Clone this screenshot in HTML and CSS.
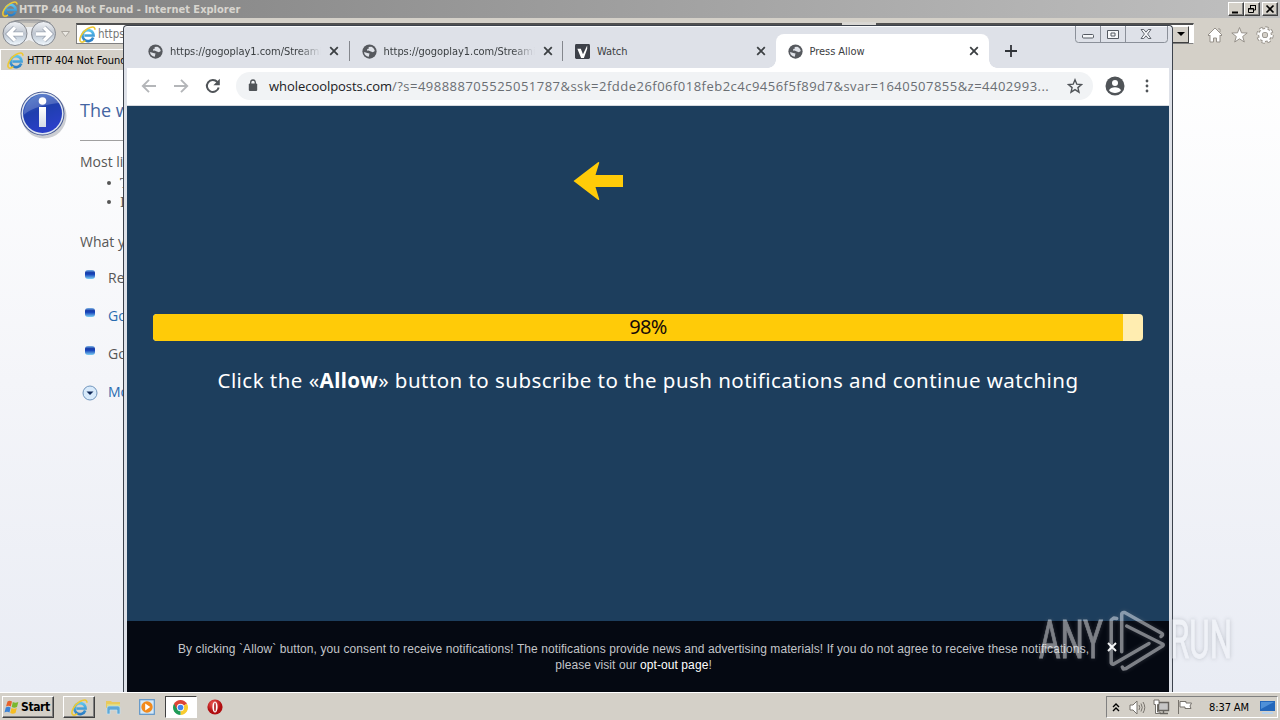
FILE: index.html
```html
<!DOCTYPE html>
<html lang="en">
<head>
<meta charset="utf-8">
<title>Press Allow</title>
<link rel="stylesheet" href="styles.css">
</head>
<body>
<svg class="defs" aria-hidden="true">
  <defs>
    <linearGradient id="ieBlue" x1="0" y1="0" x2="0" y2="1"><stop offset="0" stop-color="#5cc4ee"/><stop offset="1" stop-color="#2a7cc4"/></linearGradient>
    <linearGradient id="navDisc" x1="0" y1="0" x2="0" y2="1"><stop offset="0" stop-color="#f2f4f7"/><stop offset=".5" stop-color="#bfc6d0"/><stop offset=".75" stop-color="#d3dde7"/><stop offset="1" stop-color="#f4faff"/></linearGradient>
    <linearGradient id="infoBlue" x1="0" y1="0" x2=".4" y2="1"><stop offset="0" stop-color="#3f6fc4"/><stop offset=".5" stop-color="#1f3fae"/><stop offset="1" stop-color="#2a3fc8"/></linearGradient>
    <linearGradient id="infoStem" x1="0" y1="0" x2="0" y2="1"><stop offset="0" stop-color="#fff"/><stop offset="1" stop-color="#d4dae6"/></linearGradient>
    <radialGradient id="operaRed" cx=".4" cy=".3"><stop offset="0" stop-color="#f0605a"/><stop offset="1" stop-color="#b00d10"/></radialGradient>
    <symbol id="ie" viewBox="0 0 16 16">
      <path d="M13.400 10.800A5.200 5.200 0 1 1 13.700 8.900H5" fill="none" stroke="url(#ieBlue)" stroke-width="2.500"/>
      <path d="M1.500 14.700C-.6 12 3 5.500 8 2.600c3.600-2.100 7.200-2.500 7 .9M1.500 14.700c1.200.9 3.200.1 4.500-.9" fill="none" stroke="#eec833" stroke-width="1.500"/>
    </symbol>
    <symbol id="globe" viewBox="0 0 16 16">
      <circle cx="8" cy="8" r="7.600" fill="#56595e"/>
      <path d="M2.200 8.500l3.400 1.200 2.400.4-.8 3.400C4.500 13.400 2.300 11.500 2.200 8.500zM7 3.200l3-.4c2 .8 3.400 2.600 3.600 4.700l-2 1.200-2.800-.9-1.800-.9-1.600.2.200-1.700 1.800-.5z" fill="#dfe2e8"/>
    </symbol>
    <symbol id="cross" viewBox="0 0 10 10"><path d="M1.200 1.200l7.600 7.600M8.800 1.200L1.200 8.800" stroke="#3c4043" stroke-width="1.800" fill="none"/></symbol>
  </defs>
</svg>

<main class="desktop">
  <section class="ie">
    <header class="ie-title">
      <svg class="i16"><use href="#ie"/></svg>
      <span class="ie-title-text">HTTP 404 Not Found - Internet Explorer</span>
      <div class="ie-controls">
        <i class="btn3d"><svg width="12" height="10"><path d="M2 8.500h6" stroke="#000" stroke-width="2"/></svg></i>
        <i class="btn3d"><svg width="12" height="10"><path d="M4.500 4V1.500h5v4.500H8M4 1.500h6M2.500 4.500h5v4h-5zM2 5h6" fill="none" stroke="#000"/></svg></i>
        <i class="btn3d gap"><svg width="12" height="10"><path d="M2.500 1.500l7 7M9.500 1.500l-7 7" stroke="#000" stroke-width="1.700"/></svg></i>
      </div>
    </header>
    <div class="ie-nav">
      <svg class="nav-pill" viewBox="0 0 72 29">
        <path d="M10 3.500Q15 1 22 1h16q8 0 12 3.500z" fill="#b3b2b0"/><path d="M8 24q6 3 14 0l7-3 7 3q8 3 15 0V8H8z" fill="#eceef1"/>
        <path d="M8 4.500Q14 1 22 1h16q8 0 13 3.500" stroke="#8b8d91" fill="none"/>
        <g stroke="#858990" fill="url(#navDisc)"><circle cx="15" cy="14.500" r="12"/><circle cx="43.500" cy="14.500" r="12"/></g>
        <g fill="none" stroke="#9ba4b2" stroke-width="5"><path d="M23 15H9M15 8.500L8.500 15l6.500 6.500M36 15h14M44 8.500l6.500 6.500-6.500 6.500"/></g>
        <g fill="none" stroke="#fff" stroke-width="3.400"><path d="M23 15H9M15 8.500L8.500 15l6.500 6.500M36 15h14M44 8.500l6.500 6.500-6.500 6.500"/></g>
        <path d="M61.500 12.500h8l-4 5z" fill="#ebe9e4" stroke="#aaa69f"/>
      </svg>
      <div class="address"><svg class="i18"><use href="#ie"/></svg><span>https://gogoplay1.com</span><i class="notch"></i><i class="drop"></i></div>
      <div class="ie-tools">
        <svg width="16" height="18" viewBox="0 0 16 18"><path d="M1 9l7-7 7 7-1 1-1-1v7H9.500v-4h-3v4H3V9l-1 1zM11 3h2v3" fill="#fff" stroke="#96918a"/></svg>
        <svg width="17" height="18" viewBox="0 0 17 18"><path d="M8.500 1.500l2 5.300 5.700.2-4.500 3.500 1.600 5.500-4.800-3.200L3.700 16l1.600-5.500L.8 7l5.700-.2z" fill="#fff" stroke="#96918a"/></svg>
        <svg width="18" height="18" viewBox="0 0 18 18"><circle cx="9" cy="9" r="6.700" fill="none" stroke="#96918a" stroke-width="4" stroke-dasharray="3 2.260"/><circle cx="9" cy="9" r="4.600" fill="none" stroke="#96918a" stroke-width="4.600"/><circle cx="9" cy="9" r="6.600" fill="none" stroke="#fff" stroke-width="2.400" stroke-dasharray="2.400 2.780"/><circle cx="9" cy="9" r="4.500" fill="none" stroke="#fff" stroke-width="2.800"/></svg>
      </div>
    </div>
    <div class="ie-tabs"><div class="ie-tab"><svg class="i17"><use href="#ie"/></svg><span>HTTP 404 Not Found</span></div></div>
    <div class="ie-page">
      <svg class="info" viewBox="0 0 48 50">
        <circle cx="24" cy="26" r="22.500" fill="#9b9fa8" opacity=".5"/><circle cx="22.500" cy="23.500" r="22" fill="#4a5c94"/><circle cx="22.500" cy="23.500" r="21" fill="#dfe6f2"/><circle cx="22.500" cy="23.500" r="19.500" fill="url(#infoBlue)"/>
        <path d="M3.500 25C4 13 12 5 22.500 4c8 0 14 4 17 9C28 14 12 17 3.500 25z" fill="#fff" opacity=".2"/>
        <circle cx="22.500" cy="11" r="3.800" fill="#fff"/><path d="M19 17h7v20h-7z" fill="url(#infoStem)"/>
      </svg>
      <div class="ie-copy">
        <h1>The webpage cannot be found</h1>
        <p class="likely">Most likely causes:</p>
        <ul class="causes"><li>There might be a typing error.</li><li>If you clicked on a link.</li></ul>
        <p class="try">What you can try:</p>
        <ul class="tries">
          <li><i class="bead"></i>Retype the address.</li>
          <li class="link"><i class="bead"></i>Go back to the previous page.</li>
          <li><i class="bead"></i>Go to the main page.</li>
          <li class="link"><svg class="more" viewBox="0 0 16 16"><circle cx="8" cy="8" r="7" fill="#d8eafb" stroke="#7296bd"/><path d="M4.500 6.500h7L8 10z" fill="#102858"/></svg>More information</li>
        </ul>
      </div>
    </div>
  </section>

  <section class="chrome">
    <div class="strip">
      <div class="tab"><svg class="fav"><use href="#globe"/></svg><span class="tt fade">https://gogoplay1.com/Streaming</span><svg class="x"><use href="#cross"/></svg></div>
      <div class="tab"><svg class="fav"><use href="#globe"/></svg><span class="tt fade">https://gogoplay1.com/Streaming</span><svg class="x"><use href="#cross"/></svg></div>
      <div class="tab last"><svg class="fav" viewBox="0 0 16 16"><rect width="16" height="16" rx="1.500" fill="#3d4149"/><path d="M2.500 5h3.700l2.300 6L13 1.500V5L9.500 15h-3z" fill="#fff"/></svg><span class="tt">Watch</span><svg class="x"><use href="#cross"/></svg></div>
      <div class="tab active"><svg class="fav"><use href="#globe"/></svg><span class="tt">Press Allow</span><svg class="x"><use href="#cross"/></svg></div>
      <svg class="plus" viewBox="0 0 12 12"><path d="M6 0v12M0 6h12" stroke="#303338" stroke-width="1.800"/></svg>
    </div>
    <svg class="caption" viewBox="0 0 94 18">
      <path d="M.5 0v13.500q0 3 3 3h86q3 0 3-3V0M25.500 0v16.500M50.500 0v16.500" fill="none" stroke="#8b9099"/>
      <g fill="#f6f7f9" stroke="#555a62"><rect x="7.500" y="8.500" width="11" height="3.500" rx="1"/><path d="M32.500 4.500h11v8h-11z"/><path d="M36 7h4v3h-4z"/><path d="M66 3.500h2.800l2.200 2.700 2.200-2.700H76L72.600 8l3.400 4.500h-2.800L71 9.800l-2.200 2.700H66L69.400 8z" stroke-width=".9"/></g>
    </svg>
    <div class="toolbar">
      <svg class="nav" viewBox="0 0 16 16"><path d="M15 8H2M8 1.800L1.800 8 8 14.200" fill="none" stroke="#b4b6b9" stroke-width="1.900"/></svg>
      <svg class="nav" viewBox="0 0 16 16"><path d="M1 8h13M8 1.800L14.200 8 8 14.200" fill="none" stroke="#b4b6b9" stroke-width="1.900"/></svg>
      <svg class="nav" viewBox="0 0 16 16"><path d="M13.700 9.500A6 6 0 1 1 12.400 4" fill="none" stroke="#505458" stroke-width="2"/><path d="M14.800.8v6.400H8.400z" fill="#505458"/></svg>
      <div class="omni">
        <svg class="lock" viewBox="0 0 10 13"><rect x=".8" y="4.500" width="8.400" height="7.500" rx="1" fill="#505458"/><path d="M2.700 5V3.300a2.300 2.300 0 0 1 4.600 0V5" fill="none" stroke="#505458" stroke-width="1.300"/></svg>
        <span class="url"><b>wholecoolposts.com</b><span class="path">/?s=498888705525051787&amp;ssk=2fdde26f06f018feb2c4c9456f5f89d7&amp;svar=1640507855&amp;z=4402993...</span></span>
        <svg class="star" viewBox="0 0 16 16"><path d="M8 1.800l1.800 4.400 4.700.3-3.600 3.100 1.100 4.600L8 11.700l-4 2.500 1.100-4.600L1.500 6.500l4.700-.3z" fill="none" stroke="#505458" stroke-width="1.400"/></svg>
      </div>
      <svg class="avatar" viewBox="0 0 20 20"><circle cx="10" cy="10" r="9.500" fill="#505458"/><circle cx="10" cy="7" r="3" fill="#fff"/><path d="M4 14.300c1.500-4 10.500-4 12 0-2.500 3.500-9.500 3.500-12 0z" fill="#fff"/></svg>
      <svg class="dots" viewBox="0 0 4 14"><g fill="#505458"><circle cx="2" cy="2" r="1.400"/><circle cx="2" cy="7" r="1.400"/><circle cx="2" cy="12" r="1.400"/></g></svg>
    </div>
    <div class="page">
      <svg class="arrow" viewBox="0 0 50 40"><path d="M.5 20L25 1.200q1.500-.6 1.200.8L22.500 14H50v12H22.500l3.700 12q.3 1.400-1.200.8z" fill="#ffcb08"/></svg>
      <div class="bar"><div class="fill" style="width:98%"></div><span class="pct">98%</span></div>
      <p class="msg">Click the «<b>Allow</b>» button to subscribe to the push notifications and continue watching</p>
    </div>
    <footer class="consent">
      <p><span class="l1">By clicking `Allow` button, you consent to receive notifications! The notifications provide news and advertising materials! If you do not agree to receive these notifications,</span><br><span class="l2">please visit our <a>opt-out page</a>!</span></p>
      <svg class="dismiss" viewBox="0 0 10 10"><path d="M1 1l8 8M9 1L1 9" stroke="#fff" stroke-width="1.900"/></svg>
    </footer>
  </section>

  <svg class="watermark" viewBox="0 0 200 70">
    <g class="wm-text"><text x="3" y="52" textLength="64" lengthAdjust="spacingAndGlyphs">ANY</text><text x="134" y="52" textLength="62" lengthAdjust="spacingAndGlyphs">RUN</text></g>
    <path d="M80.700 12.500l-3-.5-2.500 2V57q.5 1.500 2.500 1L113 37.500M85.700 45.700V8q.6-2 3-1.500L126 27.500q1.500 1.500-1 3M90.700 20L126.500 38q1.500 1 0 2L90 62.500l-2.700.5-1-2"/>
  </svg>

  <footer class="taskbar">
    <div class="start"><svg width="16" height="15" viewBox="0 0 15 15"><path d="M3 1.500q2-1.500 4.500 0L6.300 6.500q-2.500-1.300-4.800 0z" fill="#e8622a"/><path d="M8.300 2q2.500 1.300 5.500 0L12.500 7q-2.800 1.300-5.300 0z" fill="#79b82e"/><path d="M1.300 7.500q2.300-1.300 4.800 0L5 12.500q-2.500-1.300-5 0z" fill="#3d83d6"/><path d="M7 8q2.500 1.300 5.300 0L11 13q-2.800 1.300-5.300 0z" fill="#f6bd23"/></svg><span>Start</span></div>
    <div class="task raised"><svg class="i17"><use href="#ie"/></svg></div>
    <div class="task"><svg width="17" height="16" viewBox="0 0 17 16"><path d="M1 2h5l1 1h8v6H1z" fill="#e9c95c"/><path d="M2 5h13v5H2z" fill="#e2dc7c"/><path d="M2 15V9q0-2 2-2h9q2 0 2 2v6h-3v-4H5v4z" fill="#5fa8d6" stroke="#c3e2f4" stroke-width=".7"/></svg></div>
    <div class="task"><svg width="16" height="16" viewBox="0 0 16 16"><rect x=".7" y=".7" width="14.600" height="14.600" fill="#d5e9f8" stroke="#5e95c8" stroke-width="1.200"/><circle cx="8" cy="8" r="5.700" fill="#f28a1c"/><path d="M6.200 4.600L11.300 8l-5.100 3.400z" fill="#fff"/></svg></div>
    <div class="task sunken"><svg width="15" height="15" viewBox="0 0 16 16"><path d="M8 8L1.100 4A8 8 0 0 1 14.900 4z" fill="#dd4437"/><path d="M8 8l6.900-4A8 8 0 0 1 8 16z" fill="#f9cb2d"/><path d="M8 8v8A8 8 0 0 1 1.100 4z" fill="#1e9b56"/><path d="M4.500 10L1.100 4H8z" fill="#dd4437"/><circle cx="8" cy="8" r="3.900" fill="#fff"/><circle cx="8" cy="8" r="3" fill="#4285f0"/></svg></div>
    <div class="task"><svg width="16" height="16" viewBox="0 0 16 16"><circle cx="8" cy="8" r="7.600" fill="url(#operaRed)"/><ellipse cx="8" cy="8" rx="2.600" ry="5.600" fill="#fff"/><ellipse cx="8" cy="8" rx=".9" ry="4.500" fill="#b32a2a"/></svg></div>
    <div class="tray">
      <svg width="8" height="9" viewBox="0 0 8 9"><path d="M1 4l3-3 3 3M1 8l3-3 3 3" fill="none" stroke="#000" stroke-width="1.400"/></svg>
      <svg class="t-sound" width="17" height="15" viewBox="0 0 17 15"><path d="M1 5h3l4-4v13l-4-4H1z" fill="#fff" stroke="#77736d"/><path d="M10 5q1.500 2.500 0 5M12 3.500q2.500 4 0 8M14 2q3.500 5.500 0 11" fill="none" stroke="#77736d"/></svg>
      <svg class="t-net" width="17" height="16" viewBox="0 0 17 16"><path d="M5.500 3.500h10v8h-10z" fill="#c6c6c6" stroke="#66635e" stroke-width="1.400"/><path d="M7 14.500h8M10.500 12v2" stroke="#66635e" stroke-width="1.400"/><path d="M1 1h5v4.500H4.500V13H7v1.500H2.500V5.500H1z" fill="#fff" stroke="#66635e" stroke-width=".9"/></svg>
      <svg class="t-flag" width="16" height="16" viewBox="0 0 16 16"><path d="M1.500 1v14M3 2.500h6V4h5.500l-1.500 3 1 2.500H8V8H3z" fill="#fff" stroke="#77736d"/></svg>
      <span class="clock">8:37 AM</span>
      <svg class="t-show" width="15" height="13" viewBox="0 0 15 13"><path d="M0 0h15v10H0z" fill="#2467bb"/><path d="M1 1h13L1 8z" fill="#4f90d8"/><path d="M2 11h11v2H2z" fill="#b9d2ea"/></svg>
    </div>
  </footer>
</main>
</body>
</html>
```

FILE: styles.css
```css
* { box-sizing: border-box; }
body { margin: 0; overflow: hidden; font-family: "DejaVu Sans Condensed", "DejaVu Sans", sans-serif; font-stretch: condensed; }
h1, p, ul { margin: 0; padding: 0; font-weight: 400; list-style: none; }
svg { display: block; flex: none; }
.defs { position: absolute; width: 0; height: 0; }
.i16 { width: 16px; height: 16px; }
.i17 { width: 17px; height: 17px; }
.i18 { width: 17px; height: 17px; }
.desktop { position: relative; width: 1280px; height: 720px; overflow: hidden; display: flex; flex-direction: column; background: #d4d0c8; }

/* Internet Explorer window */
.ie { flex: 1; min-height: 0; display: flex; flex-direction: column; overflow: hidden; white-space: nowrap; }
.ie-title { height: 18px; flex: none; display: flex; align-items: center; padding: 0 2px 0 2px; background: linear-gradient(90deg, #808080, #c0c0c0); color: #d8d5cf; }
.ie-title-text { font-size: 11px; font-weight: 700; margin-left: 1px; flex: 1; }
.ie-controls { display: flex; }
.btn3d { width: 16px; height: 14px; background: #d4d0c8; border: 1px solid; border-color: #fff #404040 #404040 #fff; box-shadow: inset -1px -1px #808080; display: block; padding: 1px; }
.btn3d.gap { margin-left: 2px; }
.ie-nav { height: 30px; flex: none; display: flex; padding-top: 1px; }
.nav-pill { width: 72px; height: 29px; }
.address { margin: 4px 0 0 4px; width: 1118px; height: 21px; background: #fff; border: 1px solid #808080; border-right-color: #fff; border-top: 2px solid #505050; display: flex; align-items: center; padding-left: 2px; font-size: 11.5px; color: #777; gap: 2px; position: relative; }
.address span { flex: 1; }
.notch { position: absolute; left: 765px; top: -3px; width: 34px; height: 4px; background: #d9d7d3; }
.drop { width: 17px; height: 17px; margin-right: 4px; background: #d4d0c8; border: 1px solid; border-color: #fff #404040 #404040 #fff; display: flex; align-items: center; justify-content: center; }
.drop::after { content: ""; border: 4px solid transparent; border-top-color: #000; border-bottom: 0; }
.ie-tools { display: flex; gap: 8px; padding: 7px 0 0 13px; }
.ie-tabs { height: 22px; flex: none; display: flex; }
.ie-tab { width: 220px; height: 22px; margin-top: 1px; border: 1px solid #fff; border-bottom: 0; display: flex; align-items: center; padding-left: 6px; gap: 3px; font-size: 11px; color: #000; letter-spacing: -.1px; }
.ie-page { flex: 1; display: flex; padding: 20px 0 0 20px; background: linear-gradient(#fff, #f4f5f9 50%, #e9ecf4); font-family: "Open Sans", "Noto Sans", sans-serif; font-stretch: normal; color: #575757; font-size: 14px; }
.info { width: 48px; height: 50px; }
.ie-copy { margin-left: 12px; padding-top: 5px; line-height: 20px; }
.ie-copy h1 { width: 700px; font-size: 18px; line-height: 31px; color: #4465a2; padding-bottom: 14px; border-bottom: 1px solid #a0a0a0; }
.likely { margin-top: 11px; }
.causes { padding-left: 40px; font: 13px/19px "DejaVu Serif", serif; margin-top: 2px; }
.causes li::before { content: ""; display: inline-block; width: 4px; height: 4px; border-radius: 50%; background: #555; margin: 0 9px 3px -13px; }
.try { margin-top: 20px; }
.tries { margin-top: 16px; display: flex; flex-direction: column; gap: 18px; }
.tries li { display: flex; padding-left: 4px; height: 20px; }
.bead { width: 10px; height: 9px; margin: 2px 13px 0 1px; border-radius: 3px; background: linear-gradient(#7cb4e6, #1439a8 30%, #1a49bd 50%, #7fd0f4); }
.more { width: 16px; height: 16px; margin: 3px 10px 0 -2px; }
.link { color: #2a6cb0; }

/* Chrome window */
.chrome { position: absolute; left: 123px; top: 25px; width: 1050px; height: 667px; border: 1px solid #3c424c; border-bottom: 0; border-radius: 4px 4px 0 0; background: #dee1e8; padding: 0 3px; display: flex; flex-direction: column; box-shadow: inset 0 1px #fafbfc; overflow: hidden; }
.strip { height: 42px; flex: none; display: flex; align-items: flex-end; padding-left: 8px; }
.tab { width: 213.500px; height: 34px; display: flex; align-items: center; padding-left: 13px; position: relative; font-size: 11px; color: #3c4043; letter-spacing: -.15px; }
.tab:not(.active):not(.last)::after { content: ""; position: absolute; right: -1px; top: 7px; width: 1px; height: 20px; background: #84878d; }
.tab.active { background: #fff; border-radius: 8px 8px 0 0; }
.tab.active .fav { margin-left: -1px; }
.tab.active::before, .tab.active::after { content: ""; position: absolute; bottom: 0; width: 8px; height: 8px; }
.tab.active::before { left: -8px; background: radial-gradient(circle at 0 0, #dee1e8 7.5px, #fff 8px); }
.tab.active::after { right: -8px; background: radial-gradient(circle at 100% 0, #dee1e8 7.5px, #fff 8px); }
.fav { width: 15px; height: 15px; }
.tt { width: 152px; margin-left: 7px; overflow: hidden; white-space: nowrap; letter-spacing: -.05px; }
.fade { -webkit-mask-image: linear-gradient(90deg, #000 128px, transparent 151px); mask-image: linear-gradient(90deg, #000 128px, transparent 151px); }
.x { width: 10px; height: 10px; margin-left: 7px; }
.plus { width: 12px; height: 12px; margin: 0 0 11px 16px; }
.caption { position: absolute; left: 951px; top: 0; width: 94px; height: 18px; }
.toolbar { height: 38px; flex: none; background: #fff; display: flex; align-items: center; padding: 0 0 2px 14px; border-bottom: 1px solid #d7dadf; }
.nav { width: 16px; height: 16px; margin-right: 16px; }
.omni { width: 857px; height: 28px; margin-left: -1px; background: #f1f3f5; border-radius: 14px; display: flex; align-items: center; padding-left: 12px; }
.lock { width: 10px; height: 13px; }
.url { width: 792px; margin-left: 11px; font-family: "Open Sans", sans-serif; font-stretch: normal; font-size: 13px; white-space: nowrap; color: #6a6e73; }
.url b { font-weight: 400; color: #202124; letter-spacing: -.05px; }
.path { letter-spacing: .485px; }
.star { width: 16px; height: 16px; margin-left: 6px; }
.avatar { width: 20px; height: 20px; margin-left: 12px; }
.dots { width: 4px; height: 14px; margin-left: 20px; }
.page { flex: 1; background: #1d3e5d; font-family: "Noto Sans", sans-serif; font-stretch: normal; padding: 55px 26px 0; }
.arrow { width: 50px; height: 40px; margin-left: 420px; }
.bar { height: 27px; margin-top: 113px; border-radius: 4px; overflow: hidden; background: #ffedb0; display: grid; }
.fill, .pct { grid-area: 1 / 1; }
.fill { background: #ffcb08; }
.pct { justify-self: center; font-size: 20px; line-height: 25px; letter-spacing: -.7px; color: #180c08; }
.msg { margin-top: 25px; text-align: center; font-size: 20.500px; line-height: 28px; letter-spacing: .455px; color: #fff; white-space: nowrap; }
.consent { height: 71px; flex: none; background: #050912; color: #c3c5c9; font: 12px/16px "Liberation Sans", Arial, sans-serif; display: flex; padding: 20px 0 0 51px; }
.consent p { width: 911px; text-align: center; white-space: nowrap; letter-spacing: .085px; }
.consent a { color: #fff; }
.dismiss { width: 10px; height: 10px; margin: 1px 0 0 18px; }

.watermark { position: absolute; left: 1036px; top: 606px; width: 200px; height: 70px; opacity: .5; filter: drop-shadow(0 0 2px rgba(110, 115, 125, .7)); }
.watermark path { fill: none; stroke: #f4f6fa; stroke-width: 3.500; stroke-linejoin: round; stroke-linecap: round; }
.wm-text text { font-family: Roboto, sans-serif; font-stretch: normal; font-size: 53px; fill: #f4f6fa; stroke: #f4f6fa; stroke-width: .9; }

/* Taskbar */
.taskbar { height: 28px; flex: none; display: flex; align-items: center; background: #d4d0c8; border-top: 1px solid #fff; padding: 1px 2px 0; z-index: 1; }
.start { width: 52px; height: 22px; display: flex; align-items: center; padding-left: 1px; gap: 1px; font-size: 12px; font-weight: 700; letter-spacing: -.4px; border: 1px solid; border-color: #fff #404040 #404040 #fff; box-shadow: inset -1px -1px #808080; margin-right: 9px; }
.task { width: 32px; height: 22px; margin-right: 2px; display: flex; align-items: center; justify-content: center; }
.raised { border: 1px solid; border-color: #fff #404040 #404040 #fff; box-shadow: inset -1px -1px #808080; }
.sunken { background: #fff; border: 1px solid; border-color: #404040 #fff #fff #404040; padding-right: 2px; }
.tray { margin-left: auto; width: 172px; height: 22px; display: flex; align-items: center; padding-left: 5px; border: 1px solid; border-color: #808080 #fff #fff #808080; font-size: 11px; }
.t-sound { margin-left: 9px; }
.t-net { margin-left: 7px; }
.t-flag { margin-left: 7px; }
.clock { margin-left: 16px; width: 44px; letter-spacing: -.1px; white-space: nowrap; }
.t-show { margin-left: 7px; }
```
